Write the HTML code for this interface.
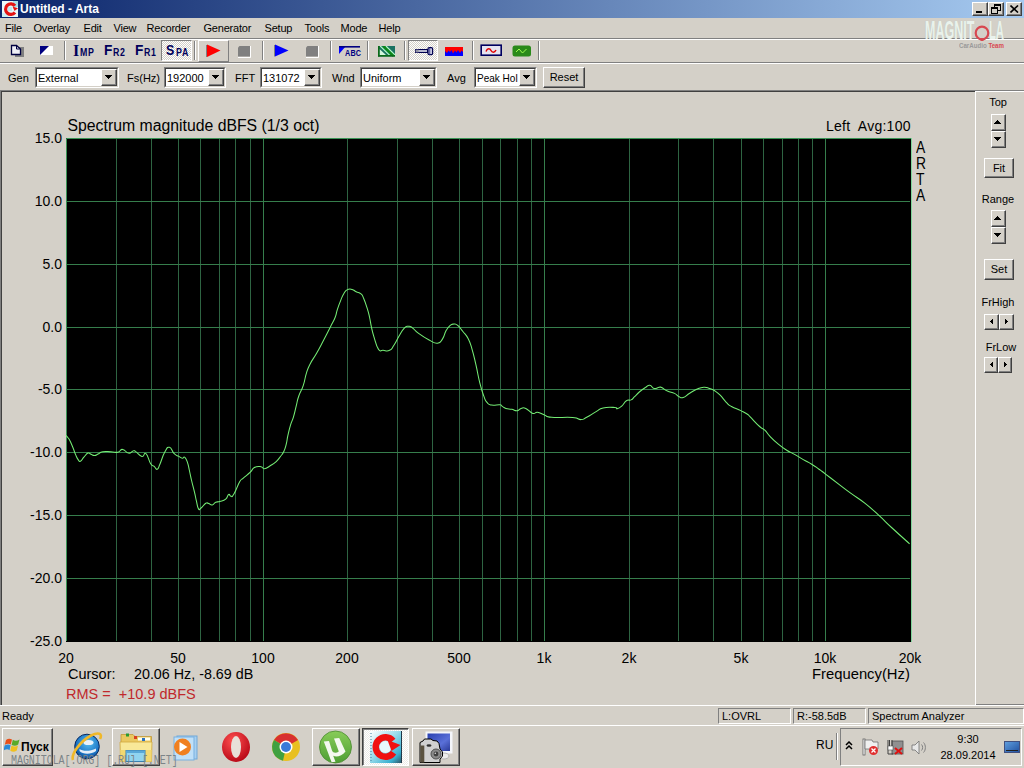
<!DOCTYPE html>
<html><head><meta charset="utf-8">
<style>
*{box-sizing:border-box;margin:0;padding:0}
html,body{width:1024px;height:768px;overflow:hidden}
body{position:relative;background:#D4D0C8;font-family:"Liberation Sans",sans-serif;font-size:11px;color:#000}
.a{position:absolute}
.t{position:absolute;white-space:pre;line-height:1}
.btn{position:absolute;background:#D4D0C8;border-top:1px solid #fff;border-left:1px solid #fff;border-right:1px solid #404040;border-bottom:1px solid #404040;box-shadow:inset -1px -1px 0 #808080}
.sunk{position:absolute;background:#fff;border-top:1px solid #808080;border-left:1px solid #808080;border-right:1px solid #fff;border-bottom:1px solid #fff;box-shadow:inset 1px 1px 0 #404040, inset -1px -1px 0 #D4D0C8}
.vsep{position:absolute;width:2px;border-left:1px solid #808080;border-right:1px solid #fff}
.tri{position:absolute;width:0;height:0;border-left:4px solid transparent;border-right:4px solid transparent;border-top:4px solid #000}
</style></head><body>

<!-- title bar -->
<div class="a" style="left:0;top:0;width:1024px;height:18px;background:linear-gradient(to right,#0A246A 0%,#A6CAF0 100%)"></div>
<div class="a" id="ticon" style="left:2px;top:1px;width:16px;height:16px">
  <svg width="16" height="16" viewBox="0 0 16 16"><rect width="16" height="16" fill="#EAF8FA"/><rect x="11" y="0" width="5" height="6" fill="#A8E0E8"/><rect x="0" y="12" width="6" height="4" fill="#C8EEF4"/><path d="M13 4.8 A5.3 5.3 0 1 0 13 11.5" stroke="#E41414" stroke-width="3.2" fill="none"/><path d="M10.5 5.5 L16 7.2 L12.5 10 Z" fill="#E41414"/><rect x="6" y="6" width="4" height="4" fill="#C0E8F0"/></svg>
</div>
<div class="t" style="left:20px;top:3px;font-weight:bold;font-size:12px;color:#fff">Untitled - Arta</div>
<div class="btn" style="left:972px;top:2px;width:16px;height:14px"><div class="a" style="left:3px;top:8px;width:6px;height:2px;background:#000"></div></div>
<div class="btn" style="left:988px;top:2px;width:16px;height:14px">
 <svg class="a" style="left:2px;top:1px" width="10" height="10"><rect x="3.5" y="0.5" width="6" height="6" fill="none" stroke="#000"/><rect x="3" y="0" width="7" height="2" fill="#000"/><rect x="0.5" y="3.5" width="6" height="6" fill="#D4D0C8" stroke="#000"/><rect x="0" y="3" width="7" height="2" fill="#000"/></svg>
</div>
<div class="btn" style="left:1006px;top:2px;width:16px;height:14px">
 <svg class="a" style="left:3px;top:2px" width="9" height="8"><path d="M0.5 0.5 L8 7.5 M8 0.5 L0.5 7.5" stroke="#000" stroke-width="1.6"/></svg>
</div>

<!-- menu bar -->
<div class="t" style="left:5px;top:23px;letter-spacing:-0.2px">File</div>
<div class="t" style="left:33.5px;top:23px;letter-spacing:-0.2px">Overlay</div>
<div class="t" style="left:83.5px;top:23px;letter-spacing:-0.2px">Edit</div>
<div class="t" style="left:113.5px;top:23px;letter-spacing:-0.2px">View</div>
<div class="t" style="left:146.5px;top:23px;letter-spacing:-0.2px">Recorder</div>
<div class="t" style="left:203.5px;top:23px;letter-spacing:-0.2px">Generator</div>
<div class="t" style="left:264.5px;top:23px;letter-spacing:-0.2px">Setup</div>
<div class="t" style="left:304.5px;top:23px;letter-spacing:-0.2px">Tools</div>
<div class="t" style="left:340.5px;top:23px;letter-spacing:-0.2px">Mode</div>
<div class="t" style="left:378.5px;top:23px;letter-spacing:-0.2px">Help</div>

<!-- toolbar etched lines -->
<div class="a" style="left:0;top:38px;width:1024px;height:1px;background:#808080"></div>
<div class="a" style="left:0;top:39px;width:1024px;height:1px;background:#fff"></div>
<div class="a" style="left:0;top:62px;width:1024px;height:1px;background:#808080"></div>
<div class="a" style="left:0;top:63px;width:1024px;height:1px;background:#fff"></div>

<svg class="a" style="left:10px;top:44px" width="16" height="14">
<rect x="5" y="3" width="9" height="10" fill="#808080"/>
<path d="M1.5 1.5 H6.5 L10.5 5 V10.5 H1.5 Z" fill="#EEEEF4" stroke="#000040" stroke-width="1.3"/>
<path d="M6.5 1.5 V5 H10" fill="none" stroke="#000040" stroke-width="1"/>
</svg>
<svg class="a" style="left:39px;top:45px" width="15" height="11">
<path d="M1 1 H14 V10 H1 Z" fill="#fff"/>
<path d="M1 1 H10 L1 10 Z" fill="#000080"/>
</svg>
<div class="a" style="left:64px;top:41px;width:1px;height:19px;background:#808080"></div><div class="a" style="left:65px;top:41px;width:1px;height:19px;background:#fff"></div>
<div class="t" style="left:73px;top:42px;font:bold 16px 'Liberation Serif',serif;color:#00005A;letter-spacing:0">I</div>
<div class="t" style="left:80px;top:47px;font:bold 10px 'Liberation Sans',sans-serif;color:#00005A;letter-spacing:0.8px;transform:scaleX(0.88);transform-origin:0 0">MP</div>
<div class="t" style="left:104px;top:41px;font:bold 15.5px 'Liberation Sans',sans-serif;color:#00005A;transform:scaleX(0.88);transform-origin:0 0">F</div>
<div class="t" style="left:112.5px;top:47px;font:bold 10px 'Liberation Sans',sans-serif;color:#00005A;letter-spacing:0.8px;transform:scaleX(0.88);transform-origin:0 0">R2</div>
<div class="t" style="left:135px;top:41px;font:bold 15.5px 'Liberation Sans',sans-serif;color:#00005A;transform:scaleX(0.88);transform-origin:0 0">F</div>
<div class="t" style="left:144px;top:47px;font:bold 10px 'Liberation Sans',sans-serif;color:#00005A;letter-spacing:0.8px;transform:scaleX(0.88);transform-origin:0 0">R1</div>
<div class="a" style="left:161px;top:40px;width:31px;height:21px;border-top:1px solid #808080;border-left:1px solid #808080;border-bottom:1px solid #fff;border-right:1px solid #fff;background-color:#ECEAE6;background-image:repeating-conic-gradient(#fff 0 25%,#D4D0C8 0 50%);background-size:2px 2px"></div>
<div class="t" style="left:166px;top:41px;font:bold 15.5px 'Liberation Sans',sans-serif;color:#00005A;transform:scaleX(0.8);transform-origin:0 0">S</div>
<div class="t" style="left:176px;top:47px;font:bold 10px 'Liberation Sans',sans-serif;color:#00005A;letter-spacing:0.8px;transform:scaleX(0.88);transform-origin:0 0">PA</div>
<div class="a" style="left:194px;top:41px;width:1px;height:19px;background:#808080"></div><div class="a" style="left:195px;top:41px;width:1px;height:19px;background:#fff"></div>
<div class="btn" style="left:198px;top:40px;width:31px;height:22px;box-shadow:none;border-bottom-color:#808080;border-right-color:#808080"></div>
<svg class="a" style="left:205px;top:44px" width="17" height="14">
<path d="M2 0.5 L15.5 6.5 L2 13 Z" fill="#FF0000"/>
<path d="M1.5 1 V13" stroke="#808080" stroke-width="1"/>
</svg>
<svg class="a" style="left:237px;top:45px" width="15" height="13">
<path d="M2.5 1 H13 V11.5 H1 V2.5 Z" fill="#808080"/>
<path d="M13.5 1 V12.5 H1" fill="none" stroke="#fff" stroke-width="1"/>
</svg>
<div class="a" style="left:262px;top:41px;width:1px;height:19px;background:#808080"></div><div class="a" style="left:263px;top:41px;width:1px;height:19px;background:#fff"></div>
<svg class="a" style="left:273px;top:44px" width="17" height="14">
<path d="M2 0.5 L15.5 6.5 L2 12.5 Z" fill="#0000FF"/>
<path d="M1.5 1 V12.5" stroke="#808080" stroke-width="1"/>
</svg>
<svg class="a" style="left:305px;top:45px" width="15" height="13">
<path d="M2.5 1 H13 V11.5 H1 V2.5 Z" fill="#808080"/>
<path d="M13.5 1 V12.5 H1" fill="none" stroke="#fff" stroke-width="1"/>
</svg>
<div class="a" style="left:330px;top:41px;width:1px;height:19px;background:#808080"></div><div class="a" style="left:331px;top:41px;width:1px;height:19px;background:#fff"></div>
<svg class="a" style="left:338px;top:45px" width="23" height="12">
<path d="M1 1 H8 L1 9 Z" fill="#0000FF"/>
<rect x="1" y="1" width="21" height="1.6" fill="#000080"/>
</svg>
<div class="t" style="left:344.5px;top:48px;font:bold 8.5px 'Liberation Sans',sans-serif;color:#000080;letter-spacing:0.2px;transform:scaleX(0.85);transform-origin:0 0">ABC</div>
<div class="a" style="left:367px;top:41px;width:1px;height:19px;background:#808080"></div><div class="a" style="left:368px;top:41px;width:1px;height:19px;background:#fff"></div>
<svg class="a" style="left:378px;top:46px" width="18" height="11" viewBox="0 0 18 11">
<rect x="0" y="0" width="17" height="10.5" fill="#1A7262"/>
<path d="M1.5 3 V9 H8 Z" fill="#D4F6DC"/>
<path d="M2.2 0 L12 9.6" stroke="#B8FFC8" stroke-width="1.1"/>
<path d="M5.3 0 L15.5 10" stroke="#0C8A14" stroke-width="2.2"/>
<path d="M8 0 L17.5 9.3" stroke="#B8FFC8" stroke-width="1.1"/>
<rect x="0" y="0" width="1.6" height="10.5" fill="#0C6A18"/>
<rect x="0" y="9" width="17" height="1.6" fill="#0C6A18"/>
</svg>
<div class="a" style="left:404px;top:41px;width:1px;height:19px;background:#808080"></div><div class="a" style="left:405px;top:41px;width:1px;height:19px;background:#fff"></div>
<div class="a" style="left:408px;top:40px;width:30px;height:21px;border-top:1px solid #808080;border-left:1px solid #808080;border-bottom:1px solid #fff;border-right:1px solid #fff;background-color:#ECEAE6;background-image:repeating-conic-gradient(#fff 0 25%,#D4D0C8 0 50%);background-size:2px 2px"></div>
<svg class="a" style="left:414px;top:46px" width="21" height="10">
<rect x="1.6" y="3.6" width="12" height="2.8" fill="#E8E8F0" stroke="#000050" stroke-width="1.2"/>
<rect x="1.6" y="3.6" width="3" height="2.8" fill="#9090A0"/>
<rect x="14" y="1.6" width="4.6" height="7" rx="1.2" fill="#C8C8E0" stroke="#000050" stroke-width="1.2"/>
<rect x="15.2" y="2" width="1" height="6.5" fill="#5050A0"/>
</svg>
<svg class="a" style="left:445px;top:47px" width="19" height="10">
<rect x="0" y="0" width="18" height="9" fill="#0000FF"/>
<path d="M0 0 H18 V5 L16.5 3.5 L15 6 L13 3 L11.5 5.5 L10 3.5 L8 6.5 L6.5 3 L5 5 L3.5 3.5 L2 6 L0 4 Z" fill="#FF0000"/>
</svg>
<div class="a" style="left:472px;top:41px;width:1px;height:19px;background:#808080"></div><div class="a" style="left:473px;top:41px;width:1px;height:19px;background:#fff"></div>
<svg class="a" style="left:480px;top:44px" width="23" height="13">
<rect x="1.2" y="1.2" width="20" height="10" fill="#E6E4F0" stroke="#000060" stroke-width="1.6"/>
<path d="M6 7.5 C7.5 3.5 10 4.5 11 6.5 C12 8.5 14.5 9 16 6" fill="none" stroke="#E00000" stroke-width="1.5"/>
</svg>
<svg class="a" style="left:512px;top:45px" width="20" height="12">
<rect x="0.5" y="0.5" width="18.5" height="11" rx="2.5" fill="#2A8A1A"/>
<path d="M4 7 L7 4 L10.5 8 L14.5 4" fill="none" stroke="#A0FF50" stroke-width="1"/>
</svg>
<div class="a" style="left:538px;top:41px;width:1px;height:19px;background:#808080"></div><div class="a" style="left:539px;top:41px;width:1px;height:19px;background:#fff"></div>
<div class="t" style="left:925px;top:15.5px;font:bold 25px 'Liberation Sans',sans-serif;color:#EAF2EC;transform:scaleX(0.5);transform-origin:0 0;text-shadow:0 0 1px #B8C8BC">MAGNIT</div>
<div class="t" style="left:989px;top:15.5px;font:bold 25px 'Liberation Sans',sans-serif;color:#EAF2EC;transform:scaleX(0.45);transform-origin:0 0;text-shadow:0 0 1px #B8C8BC">LA</div>
<svg class="a" style="left:973px;top:25px" width="18" height="18"><circle cx="9" cy="8" r="6.3" fill="none" stroke="#D84850" stroke-width="2.2"/><rect x="7.5" y="13" width="3" height="3" fill="#D84850"/></svg>
<div class="t" style="left:959px;top:40.5px;font:bold 7.5px 'Liberation Sans',sans-serif;color:#9A9A9A;transform:scaleX(0.82);transform-origin:0 0">CarAudio <span style="color:#D84850">Team</span></div>
<div class="t" style="left:8px;top:73px">Gen</div>
<div class="a" style="left:35px;top:67px;width:84px;height:21px;background:#fff;border-top:1px solid #808080;border-left:1px solid #808080;border-right:1px solid #fff;border-bottom:1px solid #fff"><div class="a" style="left:0;top:0;right:0;bottom:0;border-top:1px solid #404040;border-left:1px solid #404040;border-right:1px solid #D4D0C8;border-bottom:1px solid #D4D0C8"></div><div class="t" style="left:2px;top:5px;overflow:hidden;width:78px;letter-spacing:0px;transform:scaleX(1);transform-origin:0 0">External</div><div class="btn" style="right:1px;top:1px;width:16px;height:17px"><svg class="a" style="left:3px;top:5px" width="7" height="4"><rect x="0" y="0" width="7" height="1"/><rect x="1" y="1" width="5" height="1"/><rect x="2" y="2" width="3" height="1"/><rect x="3" y="3" width="1" height="1"/></svg></div></div>
<div class="t" style="left:127px;top:73px">Fs(Hz)</div>
<div class="a" style="left:164px;top:67px;width:62px;height:21px;background:#fff;border-top:1px solid #808080;border-left:1px solid #808080;border-right:1px solid #fff;border-bottom:1px solid #fff"><div class="a" style="left:0;top:0;right:0;bottom:0;border-top:1px solid #404040;border-left:1px solid #404040;border-right:1px solid #D4D0C8;border-bottom:1px solid #D4D0C8"></div><div class="t" style="left:2px;top:5px;overflow:hidden;width:56px;letter-spacing:0px;transform:scaleX(1);transform-origin:0 0">192000</div><div class="btn" style="right:1px;top:1px;width:16px;height:17px"><svg class="a" style="left:3px;top:5px" width="7" height="4"><rect x="0" y="0" width="7" height="1"/><rect x="1" y="1" width="5" height="1"/><rect x="2" y="2" width="3" height="1"/><rect x="3" y="3" width="1" height="1"/></svg></div></div>
<div class="t" style="left:235px;top:73px">FFT</div>
<div class="a" style="left:260px;top:67px;width:62px;height:21px;background:#fff;border-top:1px solid #808080;border-left:1px solid #808080;border-right:1px solid #fff;border-bottom:1px solid #fff"><div class="a" style="left:0;top:0;right:0;bottom:0;border-top:1px solid #404040;border-left:1px solid #404040;border-right:1px solid #D4D0C8;border-bottom:1px solid #D4D0C8"></div><div class="t" style="left:2px;top:5px;overflow:hidden;width:56px;letter-spacing:0px;transform:scaleX(1);transform-origin:0 0">131072</div><div class="btn" style="right:1px;top:1px;width:16px;height:17px"><svg class="a" style="left:3px;top:5px" width="7" height="4"><rect x="0" y="0" width="7" height="1"/><rect x="1" y="1" width="5" height="1"/><rect x="2" y="2" width="3" height="1"/><rect x="3" y="3" width="1" height="1"/></svg></div></div>
<div class="t" style="left:332px;top:73px">Wnd</div>
<div class="a" style="left:360px;top:67px;width:77px;height:21px;background:#fff;border-top:1px solid #808080;border-left:1px solid #808080;border-right:1px solid #fff;border-bottom:1px solid #fff"><div class="a" style="left:0;top:0;right:0;bottom:0;border-top:1px solid #404040;border-left:1px solid #404040;border-right:1px solid #D4D0C8;border-bottom:1px solid #D4D0C8"></div><div class="t" style="left:2px;top:5px;overflow:hidden;width:71px;letter-spacing:0px;transform:scaleX(1);transform-origin:0 0">Uniform</div><div class="btn" style="right:1px;top:1px;width:16px;height:17px"><svg class="a" style="left:3px;top:5px" width="7" height="4"><rect x="0" y="0" width="7" height="1"/><rect x="1" y="1" width="5" height="1"/><rect x="2" y="2" width="3" height="1"/><rect x="3" y="3" width="1" height="1"/></svg></div></div>
<div class="t" style="left:447px;top:73px">Avg</div>
<div class="a" style="left:474px;top:67px;width:63px;height:21px;background:#fff;border-top:1px solid #808080;border-left:1px solid #808080;border-right:1px solid #fff;border-bottom:1px solid #fff"><div class="a" style="left:0;top:0;right:0;bottom:0;border-top:1px solid #404040;border-left:1px solid #404040;border-right:1px solid #D4D0C8;border-bottom:1px solid #D4D0C8"></div><div class="t" style="left:2px;top:5px;overflow:hidden;width:57px;letter-spacing:0px;transform:scaleX(0.91);transform-origin:0 0">Peak Hol</div><div class="btn" style="right:1px;top:1px;width:16px;height:17px"><svg class="a" style="left:3px;top:5px" width="7" height="4"><rect x="0" y="0" width="7" height="1"/><rect x="1" y="1" width="5" height="1"/><rect x="2" y="2" width="3" height="1"/><rect x="3" y="3" width="1" height="1"/></svg></div></div>
<div class="btn" style="left:543px;top:67px;width:42px;height:21px"><div class="t" style="left:0;width:40px;text-align:center;top:4px">Reset</div></div>
<div class="t" style="left:968px;width:60px;text-align:center;top:97px">Top</div>
<div class="btn" style="left:991px;top:114px;width:15px;height:17px"><svg class="a" style="left:2px;top:5px" width="7" height="4"><rect x="0" y="3" width="7" height="1"/><rect x="1" y="2" width="5" height="1"/><rect x="2" y="1" width="3" height="1"/><rect x="3" y="0" width="1" height="1"/></svg></div>
<div class="btn" style="left:991px;top:131px;width:15px;height:17px"><svg class="a" style="left:2px;top:5px" width="7" height="4"><rect x="0" y="0" width="7" height="1"/><rect x="1" y="1" width="5" height="1"/><rect x="2" y="2" width="3" height="1"/><rect x="3" y="3" width="1" height="1"/></svg></div>
<div class="btn" style="left:984px;top:158px;width:30px;height:20px"><div class="t" style="left:0;width:28px;text-align:center;top:4px">Fit</div></div>
<div class="t" style="left:968px;width:60px;text-align:center;top:194px">Range</div>
<div class="btn" style="left:991px;top:210px;width:15px;height:17px"><svg class="a" style="left:2px;top:5px" width="7" height="4"><rect x="0" y="3" width="7" height="1"/><rect x="1" y="2" width="5" height="1"/><rect x="2" y="1" width="3" height="1"/><rect x="3" y="0" width="1" height="1"/></svg></div>
<div class="btn" style="left:991px;top:227px;width:15px;height:17px"><svg class="a" style="left:2px;top:5px" width="7" height="4"><rect x="0" y="0" width="7" height="1"/><rect x="1" y="1" width="5" height="1"/><rect x="2" y="2" width="3" height="1"/><rect x="3" y="3" width="1" height="1"/></svg></div>
<div class="btn" style="left:984px;top:259px;width:30px;height:21px"><div class="t" style="left:0;width:28px;text-align:center;top:4px">Set</div></div>
<div class="t" style="left:968px;width:60px;text-align:center;top:297px">FrHigh</div>
<div class="btn" style="left:984px;top:314px;width:15px;height:16px"><svg class="a" style="left:5px;top:4px" width="3" height="5"><rect x="2" y="0" width="1" height="5"/><rect x="1" y="1" width="1" height="3"/><rect x="0" y="2" width="1" height="1"/></svg></div>
<div class="btn" style="left:999px;top:314px;width:15px;height:16px"><svg class="a" style="left:5px;top:4px" width="3" height="5"><rect x="0" y="0" width="1" height="5"/><rect x="1" y="1" width="1" height="3"/><rect x="2" y="2" width="1" height="1"/></svg></div>
<div class="t" style="left:971px;width:60px;text-align:center;top:342px">FrLow</div>
<div class="btn" style="left:984px;top:357px;width:14px;height:16px"><svg class="a" style="left:5px;top:4px" width="3" height="5"><rect x="2" y="0" width="1" height="5"/><rect x="1" y="1" width="1" height="3"/><rect x="0" y="2" width="1" height="1"/></svg></div>
<div class="btn" style="left:998px;top:357px;width:14px;height:16px"><svg class="a" style="left:5px;top:4px" width="3" height="5"><rect x="0" y="0" width="1" height="5"/><rect x="1" y="1" width="1" height="3"/><rect x="2" y="2" width="1" height="1"/></svg></div>
<div class="t" style="left:2px;top:711px">Ready</div>
<div class="a" style="left:718px;top:708px;width:73px;height:16px;border-top:1px solid #808080;border-left:1px solid #808080;border-right:1px solid #fff;border-bottom:1px solid #fff"><div class="t" style="left:3px;top:2px">L:OVRL</div></div>
<div class="a" style="left:793px;top:708px;width:73px;height:16px;border-top:1px solid #808080;border-left:1px solid #808080;border-right:1px solid #fff;border-bottom:1px solid #fff"><div class="t" style="left:3px;top:2px">R:-58.5dB</div></div>
<div class="a" style="left:868px;top:708px;width:156px;height:16px;border-top:1px solid #808080;border-left:1px solid #808080;border-right:1px solid #fff;border-bottom:1px solid #fff"><div class="t" style="left:3px;top:2px">Spectrum Analyzer</div></div>


<!-- main panel -->
<div class="a" style="left:0;top:90px;width:1024px;height:1px;background:#808080"></div>
<div class="a" style="left:0;top:91px;width:975px;height:1px;background:#404040"></div>
<div class="a" style="left:0;top:90px;width:1px;height:615px;background:#808080"></div>
<div class="a" style="left:1px;top:91px;width:1px;height:614px;background:#404040"></div>
<div class="a" style="left:0;top:705px;width:1024px;height:1px;background:#fff"></div>
<!-- right panel -->
<div class="a" style="left:975px;top:91px;width:49px;height:1px;background:#fff"></div>
<div class="a" style="left:975px;top:91px;width:1px;height:614px;background:#fff"></div>
<div class="a" style="left:976px;top:704px;width:48px;height:1px;background:#808080"></div>

<svg class="a" style="left:0;top:0" width="1024" height="768">
<rect x="66" y="138" width="845" height="504" fill="#000"/>
<line x1="116.5" y1="138" x2="116.5" y2="641" stroke="#2E6442" stroke-width="1"/>
<line x1="151.5" y1="138" x2="151.5" y2="641" stroke="#2E6442" stroke-width="1"/>
<line x1="178.5" y1="138" x2="178.5" y2="641" stroke="#2E6442" stroke-width="1"/>
<line x1="200.5" y1="138" x2="200.5" y2="641" stroke="#2E6442" stroke-width="1"/>
<line x1="219.5" y1="138" x2="219.5" y2="641" stroke="#2E6442" stroke-width="1"/>
<line x1="235.5" y1="138" x2="235.5" y2="641" stroke="#2E6442" stroke-width="1"/>
<line x1="250.5" y1="138" x2="250.5" y2="641" stroke="#2E6442" stroke-width="1"/>
<line x1="263.5" y1="138" x2="263.5" y2="641" stroke="#367E4C" stroke-width="1"/>
<line x1="347.5" y1="138" x2="347.5" y2="641" stroke="#2E6442" stroke-width="1"/>
<line x1="397.5" y1="138" x2="397.5" y2="641" stroke="#2E6442" stroke-width="1"/>
<line x1="432.5" y1="138" x2="432.5" y2="641" stroke="#2E6442" stroke-width="1"/>
<line x1="459.5" y1="138" x2="459.5" y2="641" stroke="#2E6442" stroke-width="1"/>
<line x1="482.5" y1="138" x2="482.5" y2="641" stroke="#2E6442" stroke-width="1"/>
<line x1="500.5" y1="138" x2="500.5" y2="641" stroke="#2E6442" stroke-width="1"/>
<line x1="517.5" y1="138" x2="517.5" y2="641" stroke="#2E6442" stroke-width="1"/>
<line x1="531.5" y1="138" x2="531.5" y2="641" stroke="#2E6442" stroke-width="1"/>
<line x1="544.5" y1="138" x2="544.5" y2="641" stroke="#367E4C" stroke-width="1"/>
<line x1="629.5" y1="138" x2="629.5" y2="641" stroke="#2E6442" stroke-width="1"/>
<line x1="678.5" y1="138" x2="678.5" y2="641" stroke="#2E6442" stroke-width="1"/>
<line x1="713.5" y1="138" x2="713.5" y2="641" stroke="#2E6442" stroke-width="1"/>
<line x1="741.5" y1="138" x2="741.5" y2="641" stroke="#2E6442" stroke-width="1"/>
<line x1="763.5" y1="138" x2="763.5" y2="641" stroke="#2E6442" stroke-width="1"/>
<line x1="782.5" y1="138" x2="782.5" y2="641" stroke="#2E6442" stroke-width="1"/>
<line x1="798.5" y1="138" x2="798.5" y2="641" stroke="#2E6442" stroke-width="1"/>
<line x1="812.5" y1="138" x2="812.5" y2="641" stroke="#2E6442" stroke-width="1"/>
<line x1="825.5" y1="138" x2="825.5" y2="641" stroke="#367E4C" stroke-width="1"/>
<line x1="66" y1="201.5" x2="910" y2="201.5" stroke="#367E4C" stroke-width="1"/>
<line x1="66" y1="264.5" x2="910" y2="264.5" stroke="#367E4C" stroke-width="1"/>
<line x1="66" y1="327.5" x2="910" y2="327.5" stroke="#367E4C" stroke-width="1"/>
<line x1="66" y1="389.5" x2="910" y2="389.5" stroke="#367E4C" stroke-width="1"/>
<line x1="66" y1="452.5" x2="910" y2="452.5" stroke="#367E4C" stroke-width="1"/>
<line x1="66" y1="515.5" x2="910" y2="515.5" stroke="#367E4C" stroke-width="1"/>
<line x1="66" y1="578.5" x2="910" y2="578.5" stroke="#367E4C" stroke-width="1"/>
<path d="M66.5 641 V138.5 H911" fill="none" stroke="#3A9456"/>
<path d="M911.5 138 V642" fill="none" stroke="#80D49A"/>
<path d="M66.00 435.50 C66.16 435.66 65.72 435.01 66.60 436.10 C67.48 437.19 67.65 436.61 69.30 439.60 C70.95 442.59 71.09 443.22 72.80 447.30 C74.51 451.38 74.29 451.62 75.70 454.90 C77.11 458.18 76.85 457.89 78.10 459.60 C79.35 461.31 78.85 461.94 80.40 461.30 C81.95 460.66 81.87 459.39 83.90 457.20 C85.93 455.01 86.11 453.87 88.00 453.10 C89.89 452.33 89.27 453.66 91.00 454.30 C92.73 454.94 92.63 455.55 94.50 455.50 C96.37 455.45 95.81 455.11 98.00 454.10 C100.19 453.09 99.26 452.34 102.70 451.70 C106.14 451.06 106.85 451.57 110.90 451.70 C114.95 451.83 114.78 452.81 117.90 452.20 C121.02 451.59 119.77 449.16 122.60 449.40 C125.43 449.64 125.70 452.67 128.50 453.10 C131.30 453.53 131.23 451.45 133.10 451.00 C134.97 450.55 133.15 449.96 135.50 451.40 C137.85 452.84 139.10 455.79 141.90 456.40 C144.70 457.01 143.65 451.75 146.00 453.70 C148.35 455.65 148.51 460.34 150.70 463.70 C152.89 467.06 152.47 464.81 154.20 466.30 C155.93 467.79 155.63 469.99 157.20 469.30 C158.77 468.61 158.07 468.31 160.10 463.70 C162.13 459.09 162.29 456.37 164.80 452.00 C167.31 447.63 166.99 446.85 169.50 447.30 C172.01 447.75 171.72 451.27 174.20 453.70 C176.68 456.13 176.64 455.20 178.80 456.40 C180.96 457.60 180.67 457.96 182.30 458.20 C183.93 458.44 183.49 456.05 184.90 457.30 C186.31 458.55 186.40 459.38 187.60 462.90 C188.80 466.42 188.31 465.67 189.40 470.50 C190.49 475.33 190.31 475.08 191.70 481.00 C193.09 486.92 193.35 487.39 194.60 492.70 C195.85 498.01 195.36 496.58 196.40 500.90 C197.44 505.22 197.25 507.01 198.50 508.90 C199.75 510.79 199.15 509.49 201.10 508.00 C203.05 506.51 203.77 504.47 205.80 503.30 C207.83 502.13 206.99 503.15 208.70 503.60 C210.41 504.05 210.33 505.35 212.20 505.00 C214.07 504.65 213.67 503.23 215.70 502.30 C217.73 501.37 217.13 502.33 219.80 501.50 C222.47 500.67 223.35 501.07 225.70 499.20 C228.05 497.33 227.19 495.27 228.60 494.50 C230.01 493.73 229.59 496.41 231.00 496.30 C232.41 496.19 231.55 498.02 233.90 494.10 C236.25 490.18 237.29 485.87 239.80 481.60 C242.31 477.33 240.50 480.61 243.30 478.10 C246.10 475.59 247.34 475.03 250.30 472.20 C253.26 469.37 251.57 468.97 254.40 467.50 C257.23 466.03 258.23 466.38 260.90 466.70 C263.57 467.02 261.92 468.94 264.40 468.70 C266.88 468.46 267.05 467.69 270.20 465.80 C273.35 463.91 273.48 464.08 276.20 461.60 C278.92 459.12 278.37 459.19 280.40 456.50 C282.43 453.81 282.23 454.89 283.80 451.50 C285.37 448.11 285.21 448.09 286.30 443.80 C287.39 439.51 286.78 440.36 287.90 435.40 C289.02 430.44 289.01 430.16 290.50 425.20 C291.99 420.24 291.95 422.03 293.50 416.80 C295.05 411.57 294.91 411.08 296.30 405.60 C297.69 400.12 296.83 401.66 298.70 396.25 C300.57 390.84 301.22 391.55 303.30 385.30 C305.38 379.05 304.61 378.64 306.50 372.80 C308.39 366.96 307.71 368.60 310.40 363.40 C313.09 358.20 313.05 359.54 316.60 353.30 C320.15 347.06 320.02 347.04 323.70 340.00 C327.38 332.96 327.36 332.90 330.40 326.90 C333.44 320.90 333.23 322.19 335.10 317.50 C336.97 312.81 335.85 313.99 337.40 309.30 C338.95 304.61 339.17 304.11 340.90 299.90 C342.63 295.69 342.17 296.25 343.90 293.50 C345.63 290.75 345.21 290.69 347.40 289.60 C349.59 288.51 349.75 288.84 352.10 289.40 C354.45 289.96 353.85 290.53 356.20 291.70 C358.55 292.87 358.87 291.91 360.90 293.80 C362.93 295.69 362.09 294.83 363.80 298.80 C365.51 302.77 365.75 303.71 367.30 308.70 C368.85 313.69 368.51 312.65 369.60 317.50 C370.69 322.35 370.28 321.89 371.40 326.90 C372.52 331.91 371.93 330.38 373.80 336.30 C375.67 342.22 375.92 345.37 378.40 349.10 C380.88 352.83 380.11 349.98 383.10 350.30 C386.09 350.62 386.72 351.66 389.60 350.30 C392.48 348.94 391.37 349.01 393.90 345.20 C396.43 341.39 396.33 340.53 399.10 336.00 C401.87 331.47 401.87 330.79 404.30 328.20 C406.73 325.61 406.12 326.46 408.20 326.30 C410.28 326.14 409.33 325.71 412.10 327.60 C414.87 329.49 414.07 330.09 418.60 333.40 C423.13 336.71 424.06 337.39 429.10 340.00 C434.14 342.61 433.87 343.57 437.50 343.20 C441.13 342.83 440.43 341.91 442.70 338.60 C444.97 335.29 444.08 334.27 446.00 330.80 C447.92 327.33 447.82 327.39 449.90 325.60 C451.98 323.81 451.72 324.15 453.80 324.10 C455.88 324.05 455.27 323.43 457.70 325.40 C460.13 327.37 460.13 327.98 462.90 331.50 C465.67 335.02 465.67 333.91 468.10 338.60 C470.53 343.29 469.92 342.14 472.00 349.10 C474.08 356.06 473.82 355.69 475.90 364.70 C477.98 373.71 477.71 374.58 479.80 382.90 C481.89 391.22 481.83 390.70 483.75 395.90 C485.67 401.10 484.91 399.95 487.00 402.40 C489.09 404.85 488.13 404.46 491.60 405.10 C495.07 405.74 497.15 404.45 500.00 404.80 C502.85 405.15 500.73 405.44 502.30 406.40 C503.87 407.36 503.39 407.63 505.90 408.40 C508.41 409.17 508.74 408.69 511.70 409.30 C514.66 409.91 514.49 410.94 517.00 410.70 C519.51 410.46 518.75 409.01 521.10 408.40 C523.45 407.79 522.68 407.07 525.80 408.40 C528.92 409.73 529.68 412.39 532.80 413.40 C535.92 414.41 534.38 411.80 537.50 412.20 C540.62 412.60 540.74 413.54 544.50 414.90 C548.26 416.26 544.08 416.61 551.60 417.30 C559.12 417.99 564.89 416.89 572.70 417.50 C580.51 418.11 577.17 419.65 580.90 419.60 C584.63 419.55 582.65 419.43 586.70 417.30 C590.75 415.17 591.73 414.11 596.10 411.60 C600.47 409.09 598.11 408.99 603.10 407.90 C608.09 406.81 611.04 407.29 614.80 407.50 C618.56 407.71 615.36 409.07 617.20 408.70 C619.04 408.33 619.25 408.23 621.70 406.10 C624.15 403.97 623.89 402.35 626.40 400.70 C628.91 399.05 628.91 400.97 631.10 399.90 C633.29 398.83 632.41 398.81 634.60 396.70 C636.79 394.59 636.47 394.43 639.30 392.00 C642.13 389.57 642.40 389.41 645.20 387.60 C648.00 385.79 647.45 384.96 649.80 385.20 C652.15 385.44 651.49 387.94 654.00 388.50 C656.51 389.06 657.17 387.54 659.20 387.30 C661.23 387.06 659.41 386.59 661.60 387.60 C663.79 388.61 663.96 389.55 667.40 391.10 C670.84 392.65 671.38 391.91 674.50 393.40 C677.62 394.89 676.78 395.61 679.10 396.70 C681.42 397.79 680.37 398.43 683.20 397.50 C686.03 396.57 686.10 395.39 689.70 393.20 C693.30 391.01 692.94 390.87 696.70 389.30 C700.46 387.73 700.36 387.51 703.80 387.30 C707.24 387.09 706.80 387.65 709.60 388.50 C712.40 389.35 711.47 388.71 714.30 390.50 C717.13 392.29 717.01 392.05 720.20 395.20 C723.39 398.35 723.24 399.29 726.25 402.30 C729.26 405.31 727.62 404.29 731.50 406.50 C735.38 408.71 736.64 408.60 740.80 410.60 C744.96 412.60 744.59 412.32 747.10 414.00 C749.61 415.68 746.87 413.57 750.20 416.90 C753.53 420.23 755.71 422.98 759.60 426.50 C763.49 430.02 762.03 427.46 764.80 430.10 C767.57 432.74 766.40 432.64 770.00 436.40 C773.60 440.16 773.85 440.52 778.30 444.20 C782.75 447.88 782.25 447.43 786.70 450.20 C791.15 452.97 790.57 452.09 795.00 454.60 C799.43 457.11 798.85 457.04 803.30 459.60 C807.75 462.16 807.51 461.64 811.70 464.20 C815.89 466.76 815.40 466.64 819.00 469.20 C822.60 471.76 819.79 469.69 825.20 473.80 C830.61 477.91 832.42 479.37 839.30 484.60 C846.18 489.83 844.12 488.39 851.00 493.40 C857.88 498.41 857.58 497.45 865.10 503.40 C872.62 509.35 872.00 509.14 879.20 515.70 C886.40 522.26 883.99 520.51 892.10 528.00 C900.21 535.49 904.93 539.59 909.60 543.80" fill="none" stroke="#74EC74" stroke-width="1.05" stroke-linejoin="round"/>
</svg>
<div class="t" style="right:962px;top:131px;font-size:14px">15.0</div>
<div class="t" style="right:962px;top:194px;font-size:14px">10.0</div>
<div class="t" style="right:962px;top:257px;font-size:14px">5.0</div>
<div class="t" style="right:962px;top:320px;font-size:14px">0.0</div>
<div class="t" style="right:962px;top:382px;font-size:14px">-5.0</div>
<div class="t" style="right:962px;top:445px;font-size:14px">-10.0</div>
<div class="t" style="right:962px;top:508px;font-size:14px">-15.0</div>
<div class="t" style="right:962px;top:571px;font-size:14px">-20.0</div>
<div class="t" style="right:962px;top:634px;font-size:14px">-25.0</div>
<div class="t" style="left:26px;width:80px;text-align:center;top:651px;font-size:14px">20</div>
<div class="t" style="left:138px;width:80px;text-align:center;top:651px;font-size:14px">50</div>
<div class="t" style="left:223px;width:80px;text-align:center;top:651px;font-size:14px">100</div>
<div class="t" style="left:307px;width:80px;text-align:center;top:651px;font-size:14px">200</div>
<div class="t" style="left:419px;width:80px;text-align:center;top:651px;font-size:14px">500</div>
<div class="t" style="left:504px;width:80px;text-align:center;top:651px;font-size:14px">1k</div>
<div class="t" style="left:589px;width:80px;text-align:center;top:651px;font-size:14px">2k</div>
<div class="t" style="left:701px;width:80px;text-align:center;top:651px;font-size:14px">5k</div>
<div class="t" style="left:785px;width:80px;text-align:center;top:651px;font-size:14px">10k</div>
<div class="t" style="left:870px;width:80px;text-align:center;top:651px;font-size:14px">20k</div>
<div class="t" style="left:67.5px;top:118px;font-size:15.8px">Spectrum magnitude dBFS (1/3 oct)</div>
<div class="t" style="left:826px;top:119px;font-size:14px;letter-spacing:0.25px">Left  Avg:100</div>
<div class="t" style="left:915.5px;top:138.5px;font-size:16.5px;transform:scaleX(0.84);transform-origin:0 0">A</div>
<div class="t" style="left:915.5px;top:154.5px;font-size:16.5px;transform:scaleX(0.84);transform-origin:0 0">R</div>
<div class="t" style="left:915.5px;top:170.5px;font-size:16.5px;transform:scaleX(0.84);transform-origin:0 0">T</div>
<div class="t" style="left:915.5px;top:186.5px;font-size:16.5px;transform:scaleX(0.84);transform-origin:0 0">A</div>
<div class="t" style="left:68px;top:667px;font-size:14.5px">Cursor:</div>
<div class="t" style="left:134px;top:667px;font-size:14.3px">20.06 Hz, -8.69 dB</div>
<div class="t" style="left:812px;top:667px;font-size:14.8px">Frequency(Hz)</div>
<div class="t" style="left:66px;top:687px;font-size:14.5px;color:#C0282C">RMS =  +10.9 dBFS</div>
<div class="a" style="left:0;top:725px;width:1024px;height:1px;background:#fff"></div>
<div class="btn" style="left:2px;top:728px;width:51px;height:38px"></div>
<svg class="a" style="left:4px;top:737px" width="17" height="16" viewBox="0 0 17 16">
<path d="M2 3 C4 1.5 6 1.5 8 2.5 L6.8 7.5 C5 6.5 3 6.5 0.8 7.8 Z" fill="#E8501A"/>
<path d="M8.8 2.8 C11 4 13 4 15.5 2.5 L14.2 7.5 C12 9 10 9 7.6 7.9 Z" fill="#5AAA2A"/>
<path d="M0.6 8.6 C3 7.3 5 7.3 6.6 8.3 L5.5 13.2 C4 12 2 12 -0.5 13.5 Z" fill="#2A8AD8"/>
<path d="M7.4 8.7 C10 9.8 12 9.8 14 8.4 L12.8 13.5 C10.5 15 8.5 15 6.3 13.8 Z" fill="#F0C020"/>
</svg>
<div class="t" style="left:21px;top:741px;font-weight:bold;font-size:12px">Пуск</div>
<svg class="a" style="left:70px;top:731px" width="34" height="32" viewBox="0 0 34 32">
<defs><radialGradient id="ieg" cx="0.55" cy="0.35" r="0.75"><stop offset="0" stop-color="#58C0F0"/><stop offset="0.6" stop-color="#1E78C8"/><stop offset="1" stop-color="#0A3C80"/></radialGradient></defs>
<circle cx="17" cy="15.5" r="12.3" fill="url(#ieg)" stroke="#0A2A60" stroke-width="1"/>
<ellipse cx="18.5" cy="11.5" rx="5" ry="2.6" fill="#E8F2FA"/>
<path d="M9.5 18 C13 20.5 20 20.5 26 17.5 L26 20 C21 23.5 13 23.5 9.5 20 Z" fill="#E4EEF8"/>
<path d="M3 29 C1 24 9 11 21 4.5 C28 1 33 2 30 8" fill="none" stroke="#F0B828" stroke-width="2.6"/>
</svg>
<div class="btn" style="left:112px;top:728px;width:48px;height:38px"></div>
<svg class="a" style="left:118px;top:732px" width="36" height="32" viewBox="0 0 36 32">
<path d="M3 2.5 H15 L17 4.5 H33.5 V29.5 H3 Z" fill="#EAC860" stroke="#C09838" stroke-width="0.8"/>
<rect x="20" y="5.5" width="12" height="3" fill="#FFFFF0"/>
<rect x="8" y="1.5" width="3" height="3" fill="#2A9A30"/><rect x="16" y="4" width="3" height="3" fill="#D84020"/><rect x="24" y="6" width="3" height="3" fill="#2A70C0"/>
<path d="M2 10 H34 L33.5 29.5 H2.5 Z" fill="#F8E898" stroke="#D0A840" stroke-width="0.8"/>
<path d="M2.5 18 H33.5 V29.5 H2.5 Z" fill="#F2D870"/>
<rect x="8" y="18.5" width="19" height="11" fill="#90D4F0" stroke="#3A80B0" stroke-width="1"/>
<rect x="8" y="18.5" width="19" height="2.5" fill="#58A8D8"/>
</svg>
<svg class="a" style="left:171px;top:735px" width="28" height="26" viewBox="0 0 28 26">
<rect x="6" y="1" width="20" height="23" fill="#A8D0F0" stroke="#70A8D8"/>
<rect x="3" y="2" width="20" height="23" fill="#C0E0F8" stroke="#78B0E0"/>
<circle cx="11.5" cy="12" r="8.5" fill="#F08020"/>
<path d="M8.5 7 L16.5 12 L8.5 17 Z" fill="#fff"/>
</svg>
<svg class="a" style="left:221px;top:731px" width="31" height="32" viewBox="0 0 31 32">
<defs><radialGradient id="og" cx="0.4" cy="0.3" r="0.8"><stop offset="0" stop-color="#FF5050"/><stop offset="1" stop-color="#B00010"/></radialGradient></defs>
<ellipse cx="15" cy="16" rx="14" ry="15" fill="url(#og)"/>
<ellipse cx="15" cy="16" rx="5" ry="11" fill="#E8E0D8"/>
</svg>
<svg class="a" style="left:271px;top:732px" width="30" height="30" viewBox="0 0 30 30">
<circle cx="15" cy="15" r="14" fill="#E8C020"/>
<path d="M15 15 L3 8 A14 14 0 0 1 27 8 Z" fill="#D83030"/>
<path d="M15 15 L3 8 A14 14 0 0 0 12 28.7 Z" fill="#40A040"/>
<circle cx="15" cy="15" r="6.5" fill="#fff"/>
<circle cx="15" cy="15" r="5" fill="#3A7AD8"/>
</svg>
<div class="btn" style="left:312px;top:728px;width:48px;height:38px"></div>
<svg class="a" style="left:319px;top:730px" width="34" height="34" viewBox="0 0 34 34">
<defs><linearGradient id="ut" x1="0" y1="0" x2="0" y2="1"><stop offset="0" stop-color="#88CC58"/><stop offset="1" stop-color="#4E9E34"/></linearGradient></defs>
<circle cx="16.5" cy="17" r="16" fill="url(#ut)" stroke="#4A8A30" stroke-width="0.8"/>
<path d="M4.8 11.5 L10 11 L13 20.5 C14 23 17 23.5 19.8 21.5 L15 8.5 L20.2 8 L26.5 21.5 C23 26 17.5 27.5 14.2 25.8 L16.5 31.8 L12.6 32.2 Z" fill="#F4F8F0"/>
</svg>
<div class="a" style="left:362px;top:728px;width:47px;height:38px;border-top:1px solid #404040;border-left:1px solid #404040;border-bottom:1px solid #fff;border-right:1px solid #fff;box-shadow:inset 1px 1px 0 #808080;background-color:#F8F8F6;background-image:repeating-conic-gradient(#fff 0 25%,#ECEAE6 0 50%);background-size:2px 2px"></div>
<svg class="a" style="left:368px;top:730px" width="34" height="34" viewBox="0 0 34 34">
<defs><linearGradient id="ag" x1="0" y1="0" x2="1" y2="1"><stop offset="0" stop-color="#FFFFFF"/><stop offset="0.45" stop-color="#9ADCEC"/><stop offset="0.8" stop-color="#3AB0D0"/><stop offset="1" stop-color="#305060"/></linearGradient></defs>
<rect x="2" y="1" width="32" height="32" fill="url(#ag)"/>
<rect x="33" y="1" width="1.5" height="32" fill="#203848"/>
<path d="M3 3 V31" stroke="#3A7A9A" stroke-width="1" stroke-dasharray="1 2"/>
<circle cx="17.5" cy="17" r="6" fill="#E8F8FC"/>
<path d="M24.97 10.73 A9.75 9.75 0 1 0 25.49 22.59" fill="none" stroke="#F01010" stroke-width="6.5"/>
<path d="M19.5 10 L32.5 15 L23.5 21 Z" fill="#F01010"/>
</svg>
<div class="btn" style="left:412px;top:728px;width:48px;height:38px"></div>
<svg class="a" style="left:418px;top:731px" width="36" height="33" viewBox="0 0 36 33">
<defs><linearGradient id="mg" x1="0" y1="0" x2="1" y2="1"><stop offset="0" stop-color="#2840B0"/><stop offset="0.6" stop-color="#5A70D8"/><stop offset="1" stop-color="#2A3A98"/></linearGradient></defs>
<rect x="7.5" y="0.5" width="27" height="22" fill="#F4F6FA"/>
<rect x="9.5" y="2.5" width="22.5" height="17.5" fill="url(#mg)"/>
<ellipse cx="26" cy="25" rx="5" ry="3" fill="#ECECEC" stroke="#A8A8A8" stroke-width="0.8"/>
<path d="M2 11.5 L5 10 L6.5 8 L13 8 L15 9.5 L19 10 L21 12.5 L22 18 L24.5 21 L24.5 25 L22 28 L22 31.5 L2 31.5 Z" fill="#D0D0D0" stroke="#000" stroke-width="1"/>
<rect x="2.3" y="14.5" width="4" height="17" fill="#5A5240"/>
<ellipse cx="11" cy="14.5" rx="2.5" ry="1.2" fill="#303030"/>
<circle cx="18" cy="23" r="5" fill="#8A8A8A" stroke="#505050" stroke-width="1"/>
<circle cx="18" cy="23" r="2.4" fill="#404040"/>
<circle cx="17.3" cy="22.2" r="0.8" fill="#E0E0E0"/>
</svg>
<div class="t" style="left:816px;top:739px;font-size:12px">RU</div>
<div class="a" style="left:836px;top:733px;width:1px;height:27px;background:#808080"></div><div class="a" style="left:837px;top:733px;width:1px;height:27px;background:#fff"></div>
<div class="a" style="left:840px;top:728px;width:182px;height:38px;border-top:1px solid #808080;border-left:1px solid #808080;border-bottom:1px solid #fff;border-right:1px solid #fff"></div>
<svg class="a" style="left:845px;top:741px" width="9" height="9"><path d="M1 4 L4 1 L7 4 M1 8 L4 5 L7 8" fill="none" stroke="#000" stroke-width="1.5"/></svg>
<svg class="a" style="left:862px;top:738px" width="18" height="18" viewBox="0 0 18 18">
<rect x="1" y="1" width="2" height="16" fill="#fff" stroke="#606060" stroke-width="0.8"/>
<path d="M3 2 H10 L11 4 H16 V11 H3 Z" fill="#F0F0F0" stroke="#707070" stroke-width="0.8"/>
<circle cx="11.5" cy="12.5" r="4.5" fill="#E03030"/>
<path d="M9.5 10.5 L13.5 14.5 M13.5 10.5 L9.5 14.5" stroke="#fff" stroke-width="1.3"/>
</svg>
<svg class="a" style="left:887px;top:738px" width="17" height="18" viewBox="0 0 17 18">
<rect x="5" y="3" width="11" height="13" fill="#909090" stroke="#505050" stroke-width="0.8"/>
<path d="M1 2 V16 H6 M2.5 2 V8 M5 2 V8" fill="none" stroke="#404040" stroke-width="1"/>
<rect x="1" y="8" width="5" height="4" fill="#fff" stroke="#505050" stroke-width="0.6"/>
<path d="M8 10 L15 16 M15 10 L8 16" stroke="#E01010" stroke-width="2"/>
</svg>
<svg class="a" style="left:911px;top:740px" width="17" height="15" viewBox="0 0 17 15">
<path d="M1 5 H4 L8 1 V14 L4 10 H1 Z" fill="#E8E8E8" stroke="#707070" stroke-width="0.8"/>
<path d="M10.5 4.5 C12 6 12 9 10.5 10.5 M12.5 2.5 C15 5 15 10 12.5 12.5" fill="none" stroke="#808080" stroke-width="1"/>
</svg>
<div class="t" style="left:940px;top:734px;width:56px;text-align:center">9:30</div>
<div class="t" style="left:940px;top:750px;width:56px;text-align:center">28.09.2014</div>
<svg class="a" style="left:1004px;top:741px" width="16" height="12"><defs><linearGradient id="sd" x1="0" y1="0" x2="1" y2="1"><stop offset="0" stop-color="#60A0E0"/><stop offset="1" stop-color="#2050A0"/></linearGradient></defs><rect x="0.5" y="0.5" width="15" height="11" fill="url(#sd)" stroke="#405080"/><rect x="2" y="9" width="12" height="1" fill="#202020"/></svg>
<div class="t" style="left:11px;top:754px;font:10px 'Liberation Mono',monospace;color:#7C8488;transform:scaleY(1.25);transform-origin:0 0;letter-spacing:-0.05px">MAGNITOLA[.ORG] [.RU] [.NET]</div>

</body></html>
